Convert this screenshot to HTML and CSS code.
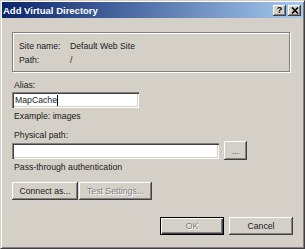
FILE: index.html
```html
<!DOCTYPE html>
<html lang="en">
<head>
    <meta charset="UTF-8">
    <title>Add Virtual Directory</title>
    <link rel="stylesheet" href="styles.css">
</head>
<body>

    <div class="window">
        <div class="titlebar">
            <span class="title">Add Virtual Directory</span>
            <div class="caption-buttons">
                <span class="caption-btn help">?</span>
                <span class="caption-btn close">
                    <svg width="8" height="7" viewBox="0 0 8 7">
                        <path d="M1 0.5 L7 6.5 M7 0.5 L1 6.5" stroke="#000" stroke-width="1.6" fill="none"/>
                    </svg>
                </span>
            </div>
        </div>

        <div class="content">
            <div class="groupbox">
                <div class="info-row"><span class="info-label">Site name:</span><span>Default Web Site</span></div>
                <div class="info-row"><span class="info-label">Path:</span><span>/</span></div>
            </div>

            <div class="label label-alias">Alias:</div>
            <div class="field field-alias">MapCache<span class="caret"></span></div>
            <div class="label hint">Example: images</div>

            <div class="label label-path">Physical path:</div>
            <div class="path-row">
                <div class="field field-path"></div>
                <button class="btn btn-browse">...</button>
            </div>

            <div class="label">Pass-through authentication</div>
            <div class="auth-row">
                <button class="btn btn-connect">Connect as...</button>
                <button class="btn btn-test" disabled>Test Settings...</button>
            </div>

            <div class="dialog-buttons">
                <button class="btn btn-dialog btn-default" disabled>OK</button>
                <button class="btn btn-dialog">Cancel</button>
            </div>
        </div>
    </div>

</body>
</html>
```

FILE: styles.css
```css
body {
    margin: 0;
    padding: 0;
    background-color: #d4d0c8;
    font-family: "Liberation Sans", Arial, sans-serif;
    font-size: 8.7px;
    color: #1a1a1a;
}
.window {
    width: 305px;
    height: 249px;
    box-sizing: border-box;
    border: 1px solid;
    border-color: #d4d0c8 #404040 #404040 #d4d0c8;
    box-shadow: inset 1px 1px #fff, inset -1px -1px #808080;
    padding: 1px;
    background-color: #d4d0c8;
}
.titlebar {
    height: 16px;
    display: flex;
    align-items: center;
    justify-content: space-between;
    background: linear-gradient(to right, #0a246a, #a6caf0);
    padding: 0 2px 0 1px;
}
.title {
    color: #fff;
    font-weight: bold;
    font-size: 9.5px;
}
.caption-buttons {
    display: flex;
    gap: 2px;
}
.caption-btn {
    width: 13px;
    height: 11px;
    display: flex;
    align-items: center;
    justify-content: center;
    background-color: #d4d0c8;
    box-shadow: inset -1px -1px #404040, inset 1px 1px #fff, inset -2px -2px #808080;
    font-weight: bold;
    font-size: 9px;
    line-height: 11px;
    color: #000;
}
.content {
    padding: 14px 10px 0 10px;
}
.groupbox {
    width: 278px;
    box-sizing: border-box;
    border: 1px solid #808080;
    box-shadow: 1px 1px 0 #fff, inset 1px 1px 0 #fff;
    padding: 6px 0 4px 6px;
}
.info-row {
    display: grid;
    grid-template-columns: 51px auto;
    line-height: 14px;
}
.label {
    line-height: 14px;
    padding-left: 2px;
}
.label-alias {
    margin-top: 6px;
}
.hint {
    margin-top: 1px;
}
.label-path {
    margin-top: 5px;
}
.field {
    height: 16px;
    box-sizing: border-box;
    background-color: #fff;
    box-shadow: inset 1px 1px #808080, inset 2px 2px #404040, inset -1px -1px #fff, inset -2px -2px #d4d0c8;
    padding-left: 3px;
    line-height: 16px;
}
.field-alias {
    width: 127px;
}
.caret {
    display: inline-block;
    width: 1px;
    height: 11px;
    background-color: #000;
    vertical-align: middle;
}
.path-row {
    display: flex;
    align-items: center;
    gap: 5px;
    margin-top: -1px;
}
.field-path {
    width: 207px;
}
.btn {
    font: inherit;
    color: #1a1a1a;
    background-color: #d4d0c8;
    border: none;
    padding: 0;
    height: 18px;
    box-shadow: inset -1px -1px #404040, inset 1px 1px #fff, inset -2px -2px #808080;
}
.btn:disabled {
    color: #808080;
    text-shadow: 1px 1px #fff;
}
.btn-browse {
    width: 23px;
    height: 19px;
    color: #6a3a7a;
}
.auth-row {
    display: flex;
    gap: 1px;
    margin-top: 8px;
}
.btn-connect {
    width: 66px;
}
.btn-test {
    width: 73px;
}
.dialog-buttons {
    display: flex;
    justify-content: flex-end;
    gap: 5px;
    margin-top: 17px;
}
.btn-dialog {
    width: 64px;
}
.btn-default {
    box-shadow: inset 0 0 0 1px #000, inset 2px 2px #fff, inset -2px -2px #404040, inset -3px -3px #808080;
}
```
